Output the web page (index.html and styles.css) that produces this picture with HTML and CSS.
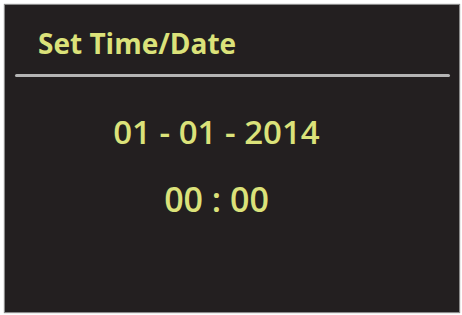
FILE: index.html
```html
<!DOCTYPE html>
<html>
<head>
<meta charset="utf-8">
<link rel="stylesheet" href="styles.css">
</head>
<body>
<div class="screen">
  <div class="title">Set Time/Date</div>
  <div class="rule"></div>
  <div class="values">
    <div class="date">01 - 01 - 2014</div>
    <div class="time">00 : 00</div>
  </div>
</div>
</body>
</html>
```
FILE: styles.css
```css
html, body {
  margin: 0;
  padding: 0;
  background: #ffffff;
}
body {
  width: 462px;
  height: 315px;
  padding: 5px 3px 3px 5px;
  box-sizing: border-box;
}
.screen {
  width: 454px;
  height: 307px;
  background: #231f20;
  box-shadow: 0 0 1px 1px #8a8a8a;
  font-family: "Open Sans", sans-serif;
  font-weight: 600;
  color: #dbe27a;
  display: flex;
  flex-direction: column;
  padding: 19px 9px 0 10px;
  box-sizing: border-box;
}
.title {
  font-size: 28px;
  font-weight: 700;
  line-height: 38px;
  padding-left: 23px;
}
.rule {
  height: 3px;
  background: #b4b4b4;
  margin-top: 12px;
  border-radius: 2px;
}
.values {
  display: flex;
  flex-direction: column;
  align-items: center;
  padding-top: 32px;
  padding-right: 32px;
  gap: 21px;
}
.date, .time {
  font-size: 34px;
  line-height: 46px;
}
.date {
  font-size: 33px;
}
```
